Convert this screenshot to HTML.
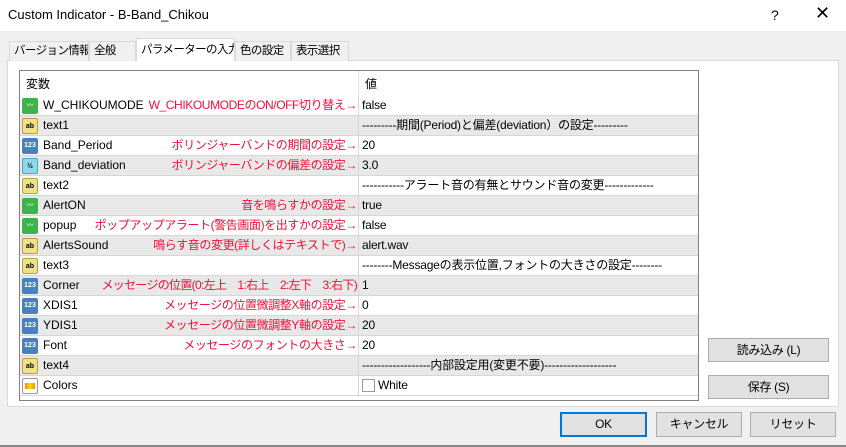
<!DOCTYPE html>
<html><head><meta charset="utf-8"><style>
*{margin:0;padding:0;box-sizing:border-box}
body{width:846px;height:447px;background:#f0f0f0;font-family:"Liberation Sans","Noto Sans CJK JP",sans-serif;font-size:12px;color:#000;position:relative;overflow:hidden}
.abs{position:absolute}
#title{left:0;top:0;width:846px;height:31px;background:#fff}
.tab{position:absolute;top:41px;height:20px;border:1px solid #d9d9d9;border-bottom:none;background:#f0f0f0;line-height:19px;padding-left:4px;white-space:nowrap;font-size:11.5px;letter-spacing:-0.6px;overflow:hidden}
#table{left:19px;top:70px;width:680px;height:331px;border:1px solid #828282;background:#fff}
.row{position:absolute;left:0;width:678px;height:20px;border-bottom:1px solid #d6d6d6;line-height:19px}
.row.g{background:#e8e8e8}
.n{position:absolute;left:23px}
.ic{position:absolute;left:2px;top:2px;width:16px;height:16px;border-radius:2px;font-size:7px;line-height:16px;text-align:center;font-weight:bold}
.r{position:absolute;right:341px;color:#f0103a;white-space:nowrap;font-size:12px;letter-spacing:-0.4px}
.v{position:absolute;left:338px;top:0;height:20px;border-left:1px solid #d6d6d6;padding-left:3px;width:340px;white-space:nowrap;letter-spacing:-0.2px}
.btn{position:absolute;background:#e1e1e1;border:1px solid #adadad;text-align:center;letter-spacing:-0.3px}
</style></head><body>
<div class="abs" id="title"><span class="abs" style="left:8px;top:7px;font-size:13px">Custom Indicator - B-Band_Chikou</span><span class="abs" style="left:771px;top:7px;font-size:14px">?</span><span class="abs" style="left:815px;top:3px;font-size:18px">✕</span></div>
<div class="abs" style="left:7px;top:60px;width:832px;height:347px;background:#fff;border:1px solid #d9d9d9"></div>
<div class="tab" style="left:9px;width:80px">バージョン情報</div>
<div class="tab" style="left:89px;width:47px">全般</div>
<div class="tab" style="left:136px;top:38px;height:23px;width:99px;background:#fff;line-height:22px">パラメーターの入力</div>
<div class="tab" style="left:235px;width:56px">色の設定</div>
<div class="tab" style="left:291px;width:58px">表示選択</div>
<div class="abs" id="table">
<div class="row" style="top:0;height:25px;line-height:26px;border-bottom:none"><span class="abs" style="left:6px">変数</span><span class="abs" style="left:338px;top:0;height:25px;border-left:1px solid #e0e0e0;padding-left:6px">値</span></div>
<div class="row" style="top:25px"><div class="ic" style="background:#3cb44a;color:#fff">〰</div><span class="n">W_CHIKOUMODE</span><span class="r">W_CHIKOUMODEのON/OFF切り替え→</span><div class="v">false</div></div>
<div class="row g" style="top:45px"><div class="ic" style="background:#efe08a;border:1px solid #b8a040">ab</div><span class="n">text1</span><div class="v">---------期間(Period)と偏差(deviation）の設定---------</div></div>
<div class="row" style="top:65px"><div class="ic" style="background:#4a7fc0;color:#fff">123</div><span class="n">Band_Period</span><span class="r">ボリンジャーバンドの期間の設定→</span><div class="v">20</div></div>
<div class="row g" style="top:85px"><div class="ic" style="background:#8fd8e8;border:1px solid #4aa8c0">½</div><span class="n">Band_deviation</span><span class="r">ボリンジャーバンドの偏差の設定→</span><div class="v">3.0</div></div>
<div class="row" style="top:105px"><div class="ic" style="background:#efe08a;border:1px solid #b8a040">ab</div><span class="n">text2</span><div class="v">-----------アラート音の有無とサウンド音の変更-------------</div></div>
<div class="row g" style="top:125px"><div class="ic" style="background:#3cb44a;color:#fff">〰</div><span class="n">AlertON</span><span class="r">音を鳴らすかの設定→</span><div class="v">true</div></div>
<div class="row" style="top:145px"><div class="ic" style="background:#3cb44a;color:#fff">〰</div><span class="n">popup</span><span class="r">ポップアップアラート(警告画面)を出すかの設定→</span><div class="v">false</div></div>
<div class="row g" style="top:165px"><div class="ic" style="background:#efe08a;border:1px solid #b8a040">ab</div><span class="n">AlertsSound</span><span class="r">鳴らす音の変更(詳しくはテキストで)→</span><div class="v">alert.wav</div></div>
<div class="row" style="top:185px"><div class="ic" style="background:#efe08a;border:1px solid #b8a040">ab</div><span class="n">text3</span><div class="v">--------Messageの表示位置,フォントの大きさの設定--------</div></div>
<div class="row g" style="top:205px"><div class="ic" style="background:#4a7fc0;color:#fff">123</div><span class="n">Corner</span><span class="r" style="letter-spacing:-0.7px">メッセージの位置(0:左上　1:右上　2:左下　3:右下)</span><div class="v">1</div></div>
<div class="row" style="top:225px"><div class="ic" style="background:#4a7fc0;color:#fff">123</div><span class="n">XDIS1</span><span class="r">メッセージの位置微調整X軸の設定→</span><div class="v">0</div></div>
<div class="row g" style="top:245px"><div class="ic" style="background:#4a7fc0;color:#fff">123</div><span class="n">YDIS1</span><span class="r">メッセージの位置微調整Y軸の設定→</span><div class="v">20</div></div>
<div class="row" style="top:265px"><div class="ic" style="background:#4a7fc0;color:#fff">123</div><span class="n">Font</span><span class="r">メッセージのフォントの大きさ→</span><div class="v">20</div></div>
<div class="row g" style="top:285px"><div class="ic" style="background:#efe08a;border:1px solid #b8a040">ab</div><span class="n">text4</span><div class="v">------------------内部設定用(変更不要)-------------------</div></div>
<div class="row" style="top:305px"><div class="ic" style="background:#fff;border:1px solid #999"><div style="margin:4px 2px;height:6px;background:linear-gradient(90deg,#f80,#fd0,#f80)"></div></div><span class="n">Colors</span><div class="v"><span style="display:inline-block;width:13px;height:13px;border:1px solid #999;vertical-align:-3px;margin-right:3px"></span>White</div></div>
</div>
<div class="btn" style="left:708px;top:338px;width:121px;height:24px;line-height:22px">読み込み (L)</div>
<div class="btn" style="left:708px;top:375px;width:121px;height:24px;line-height:22px">保存 (S)</div>
<div class="btn" style="left:560px;top:412px;width:87px;height:25px;line-height:21px;border:2px solid #0078d7">OK</div>
<div class="btn" style="left:656px;top:412px;width:86px;height:25px;line-height:23px">キャンセル</div>
<div class="btn" style="left:750px;top:412px;width:86px;height:25px;line-height:23px">リセット</div>
<div class="abs" style="left:0;top:445px;width:846px;height:2px;background:#888"></div>
</body></html>
